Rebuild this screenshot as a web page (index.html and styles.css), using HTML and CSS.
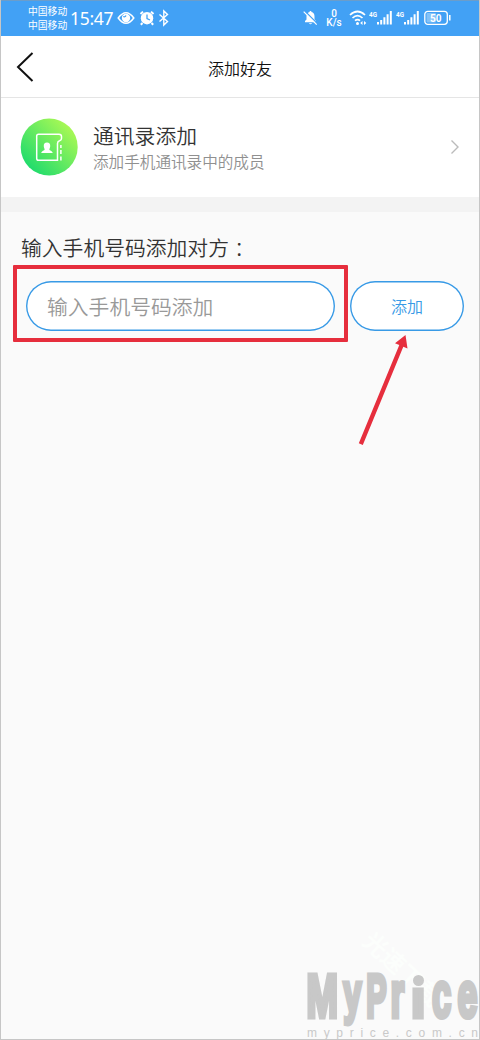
FILE: index.html
```html
<!DOCTYPE html>
<html lang="zh-CN">
<head>
<meta charset="utf-8">
<title>添加好友</title>
<link rel="stylesheet" href="styles.css">
</head>
<body>
<div class="screen">
  <header class="status">
    <div class="carriers"><span>中国移动</span><span>中国移动</span></div>
    <span class="clock">15:47</span>
    <svg class="status-left" width="54" height="18" viewBox="0 0 54 18" fill="none" stroke="#fff">
      <path d="M1.2 9Q9 -1.5 16.8 9Q9 19.500 1.200 9Z" stroke-width="1.500"/>
      <circle cx="9" cy="9" r="4.200" fill="#fff" stroke="none"/>
      <path d="M6.200 7.500Q8 8.500 9 6.500" stroke="#42a1f5" stroke-width="1.300"/>
      <circle cx="30" cy="9.200" r="6.200" fill="#fff" stroke="none"/>
      <path d="M23.500 5L26 2.600M36.500 5L34 2.600M25.500 14l-1.700 1.800M34.500 14l1.700 1.800" stroke-width="2"/>
      <path d="M30 5.500V9.500L33 11" stroke="#42a1f5" stroke-width="1.300"/>
      <path d="M42.500 5.500L50.500 12.500L46.800 16V2L50.500 5.500L42.500 12.500" stroke-width="1.400"/>
    </svg>
    <div class="spacer"></div>
    <svg class="bell" width="15" height="16" viewBox="0 0 15 16">
      <path d="M2 12.200V11L3.500 9.500V6.500C3.500 4 5 2.500 6.500 2.100C6.500.7 8.500.7 8.500 2.100C10.500 2.600 11.500 4.300 11.500 6.500V9.500L13 11V12.200ZM5.800 13.200H9.200Q7.500 15.500 5.800 13.200" fill="#fff"/>
      <path d="M1.500.8L14.500 13.800" stroke="#42a1f5" stroke-width="1.300"/>
      <path d="M.7 1.600L13.700 14.600" stroke="#fff" stroke-width="1.200"/>
    </svg>
    <div class="speed"><span>0</span><span>K/s</span></div>
    <svg class="wifi" width="18" height="16" viewBox="0 0 18 16" fill="none" stroke="#fff" stroke-width="1.700">
      <path d="M1 5Q8.500 -2 16 5M3.500 8Q8.500 3.200 13.500 8M6 10.700Q8.500 8.500 11 10.700"/>
      <circle cx="8.500" cy="13.500" r="1.500" fill="#fff" stroke="none"/>
      <path d="M11.200 13L13.500 10.900V15.100ZM17.300 13L15 10.900V15.100Z" fill="#fff" stroke="none"/>
    </svg>
    <svg class="signal" width="24" height="16" viewBox="0 0 24 16" fill="#fff">
      <text x="0" y="7" class="gen" textLength="8" lengthAdjust="spacingAndGlyphs">4G</text>
      <path d="M8 12h2v2.500H8zM11.200 10h2v4.500h-2zM14.400 7.200h2v7.300h-2zM17.600 4.200h2v10.300h-2zM20.800 1h2v13.500h-2z"/>
    </svg>
    <svg class="signal second" width="24" height="16" viewBox="0 0 24 16" fill="#fff">
      <text x="0" y="7" class="gen" textLength="8" lengthAdjust="spacingAndGlyphs">4G</text>
      <path d="M8 12h2v2.500H8zM11.200 10h2v4.500h-2zM14.400 7.200h2v7.300h-2zM17.600 4.200h2v10.300h-2zM20.800 1h2v13.500h-2z"/>
    </svg>
    <svg class="battery" width="28" height="16" viewBox="0 0 28 16">
      <rect x=".8" y="1.300" width="22.500" height="13" rx="3" fill="none" stroke="#fff" stroke-width="1.300"/>
      <rect x="2.500" y="3" width="9.500" height="9.600" rx="1" fill="#fff" opacity=".35"/>
      <path d="M25.800 5v5.500" stroke="#fff" stroke-width="1.500"/>
      <text x="6" y="11.600" class="level" fill="#fff">50</text>
    </svg>
  </header>

  <nav class="navbar">
    <svg class="back" width="20" height="32" viewBox="0 0 20 32"><path d="M18.500 2L4 16L18.500 30" fill="none" stroke="#111" stroke-width="2"/></svg>
    <h1>添加好友</h1>
  </nav>

  <section class="contact">
    <svg class="avatar" width="58" height="58" viewBox="0 0 58 58">
      <defs><linearGradient id="green" x1="0.150" y1="0.850" x2="0.850" y2="0.150"><stop offset="0" stop-color="#22dc6c"/><stop offset="1" stop-color="#a7f855"/></linearGradient></defs>
      <circle cx="29.200" cy="29" r="28.500" fill="url(#green)"/>
      <g fill="none" stroke="#fff" stroke-width="1.500">
        <path d="M37.500 42.300H18.500Q16.700 42.300 16.700 40.500V18Q16.700 16.200 18.500 16.200H39Q41.500 16.200 41.500 18.500V20.500Q41.500 22 39.500 22.800Q37.500 23.500 37.500 25.500Z"/>
        <path d="M40.900 27v3M40.900 32v4M40.900 38.500v4"/>
      </g>
      <path d="M27 24.500c2.300 0 3.500 1.600 3.200 4c-.2 1.700-.8 2.200-.8 3.300c0 .9 3.100 1 3.300 3.200H21.300c.2-2.200 3.300-2.300 3.300-3.200c0-1.100-.6-1.600-.8-3.300c-.3-2.400.9-4 3.200-4z" fill="#fff"/>
    </svg>
    <div class="contact-text"><h2>通讯录添加</h2><p>添加手机通讯录中的成员</p></div>
    <svg class="chevron" width="10" height="16" viewBox="0 0 10 16"><path d="M1.500 1.500L8 8L1.500 14.500" fill="none" stroke="#bbb" stroke-width="1.400"/></svg>
  </section>
  <div class="divider"></div>

  <main class="content">
    <label for="phone">输入手机号码添加对方<span class="colon">：</span></label>
    <div class="form-row">
      <div class="highlight"><input id="phone" class="phone" type="tel" placeholder="输入手机号码添加"></div>
      <button class="add">添加</button>
    </div>
    <svg class="arrow" width="52" height="114" viewBox="0 0 52 114"><path d="M46.500 1L48.500 14.500L44.300 12.800L3.800 111L-.2 109.200L40.300 11L36 9.200Z" fill="#e62e3d"/></svg>
  </main>

  <svg class="watermark" width="182" height="120" viewBox="298 920 182 120">
    <text class="faint" transform="translate(361 943) rotate(43)">光速下载</text>
    <g class="logo">
      <text transform="translate(306.500 1016.500) scale(.62 1)" font-size="61">M</text>
      <text transform="translate(343.500 1011.500) scale(.58 1)" font-size="55">y</text>
      <text transform="translate(366.300 1016.500) scale(.5 1)" font-size="61">P</text>
      <text transform="translate(390.500 1016.500) scale(.55 1)" font-size="64">r</text>
      <text transform="translate(411.500 1016.500) scale(.95 1)" font-size="50">ı</text>
      <text transform="translate(432 1016.500) scale(.54 1)" font-size="64">c</text>
      <text transform="translate(457.500 1016.500) scale(.56 1)" font-size="64">e</text>
      <circle cx="418.500" cy="980.500" r="5.500" stroke="none"/>
    </g>
    <text class="domain" x="307" y="1036.500" textLength="171">myprice.com.cn</text>
  </svg>
</div>
</body>
</html>
```
FILE: styles.css
```css
* { box-sizing: border-box; }
body { margin: 0; font-family: "Noto Sans CJK SC", sans-serif; font-weight: 350; }
h1, h2, p { margin: 0; font-weight: inherit; }
svg { display: block; flex: none; }
.screen { position: relative; width: 480px; height: 1040px; display: flex; flex-direction: column; background: #fafafa; border: 1px solid #c6c6c6; border-top: 0; overflow: hidden; }
.status { height: 36px; margin: 0 -1px; padding: 0 28px 1px 28px; display: flex; align-items: center; background: #42a1f5; border-top: 1px solid #6b9dca; color: #fff; flex: none; }
.carriers { display: flex; flex-direction: column; width: 42px; font-size: 9.8px; line-height: 14px; font-weight: 400; white-space: nowrap; }
.clock { width: 47px; font-family: "Noto Sans", sans-serif; font-size: 17.5px; font-weight: 400; line-height: 20px; letter-spacing: -.3px; }
.spacer { flex: 1; }
.bell { margin-right: 8px; }
.speed { display: flex; flex-direction: column; align-items: center; width: 16px; font: 500 10px/9px Roboto, sans-serif; margin-right: 7px; }
.wifi { margin-right: 2px; }
.signal { margin-right: 3px; }
.second { margin-right: 4px; }
.gen { font: 700 8px Roboto, sans-serif; }
.level { font: 700 10px Roboto, sans-serif; }
.navbar { height: 62px; position: relative; display: flex; align-items: center; justify-content: center; flex: none; background: #fff; border-bottom: 1px solid #e5e5e5; color: #111; }
.navbar h1 { font-size: 16px; font-weight: 350; line-height: 24px; padding-top: 2px; }
.back { position: absolute; left: 13px; top: 15px; }
.contact { height: 99px; display: flex; align-items: center; flex: none; background: #fff; padding: 0 19px 2px; }
.contact-text { flex: 1; padding: 2px 0 0 15px; }
.contact h2 { font-size: 20.8px; line-height: 28px; color: #333; }
.contact p { font-size: 15.6px; line-height: 25px; color: #909090; }
.divider { height: 15px; flex: none; background: #f3f3f3; }
.content { position: relative; padding: 18px 0 0 12px; }
.content label { display: block; padding-left: 8px; height: 35px; font-size: 20.8px; line-height: 34px; color: #333; white-space: nowrap; }
.colon { margin-left: 5px; font-weight: 300; }
.form-row { display: flex; align-items: center; gap: 2px; }
.highlight { width: 335px; height: 77px; border: 4px solid #e62e3d; border-radius: 1px; display: flex; align-items: center; padding: 5px 9px 0 8.5px; }
.phone { width: 309.5px; height: 50px; padding: 0 0 1px 21.5px; border: 0; box-shadow: inset 0 0 0 1.4px #389ae6; border-radius: 25px; background: #fff; font: inherit; font-size: 20.8px; outline: 0; }
.phone::placeholder { color: #999; opacity: 1; }
.add { width: 114px; height: 50px; margin-top: 5px; padding: 0; border: 0; box-shadow: inset 0 0 0 1.4px #389ae6; border-radius: 25px; background: #fff; color: #389ae6; font: inherit; font-size: 16px; }
.arrow { position: absolute; left: 358px; top: 122px; overflow: visible; }
.watermark { position: absolute; right: -1px; bottom: -1px; }
.logo { font-family: "Liberation Sans", sans-serif; font-weight: 700; fill: #c8c8c8; stroke: #c8c8c8; stroke-width: 5px; }
.domain { font-family: "Liberation Sans", sans-serif; font-size: 12px; fill: #c9c9c9; }
.faint { font-size: 24px; font-weight: 700; fill: #fcfefc; }
```
